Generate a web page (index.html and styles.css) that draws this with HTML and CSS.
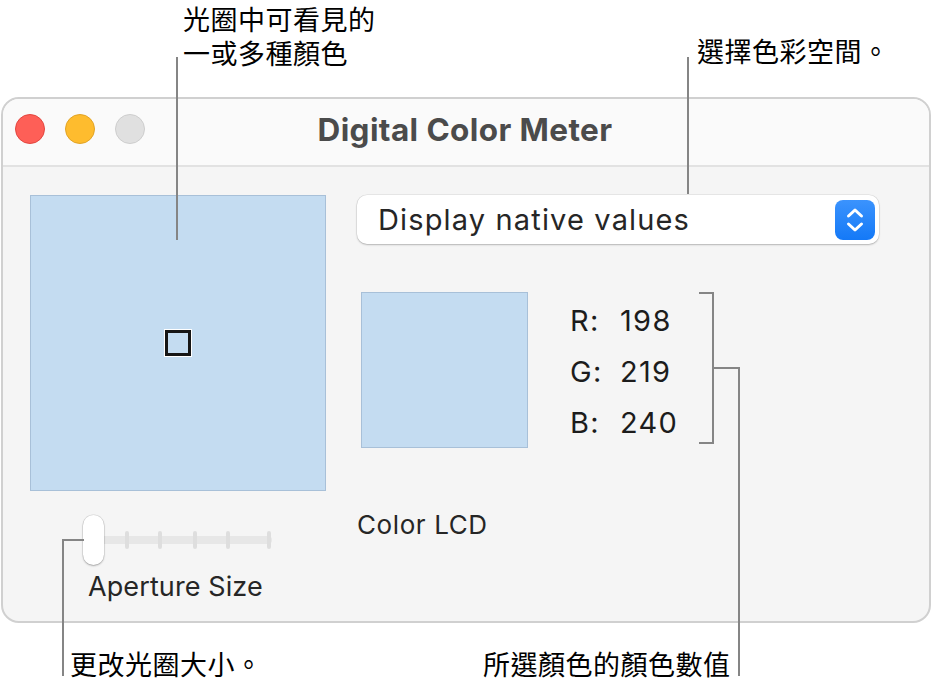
FILE: index.html
```html
<!DOCTYPE html>
<html lang="zh-Hant">
<head>
<meta charset="utf-8">
<title>Digital Color Meter</title>
<link rel="stylesheet" href="styles.css">
</head>
<body>
<div class="figure">
  <div class="window">
    <div class="titlebar">
      <div class="lights">
        <span class="light red"></span>
        <span class="light yellow"></span>
        <span class="light gray"></span>
      </div>
      <div class="title">Digital Color Meter</div>
    </div>
    <div class="content">
      <div class="left-col">
        <div class="aperture"><span class="marker"></span></div>
        <div class="slider">
          <div class="track">
            <span class="tick"></span><span class="tick"></span><span class="tick"></span><span class="tick"></span><span class="tick"></span>
          </div>
          <span class="knob"></span>
        </div>
        <div class="slider-label">Aperture Size</div>
      </div>
      <div class="right-col">
        <div class="popup">
          <span class="popup-text">Display native values</span>
          <span class="popup-btn">
            <svg width="40" height="40" viewBox="0 0 40 40"><path d="M13.5 16 L20 10 L26.5 16" fill="none" stroke="#fff" stroke-width="3" stroke-linecap="round" stroke-linejoin="round"/><path d="M13.5 24 L20 30 L26.5 24" fill="none" stroke="#fff" stroke-width="3" stroke-linecap="round" stroke-linejoin="round"/></svg>
          </span>
        </div>
        <div class="readout">
          <div class="swatch"></div>
          <div class="values">
            <div class="vrow"><span class="vlabel">R:</span><span class="vnum">198</span></div>
            <div class="vrow"><span class="vlabel">G:</span><span class="vnum">219</span></div>
            <div class="vrow"><span class="vlabel">B:</span><span class="vnum">240</span></div>
          </div>
        </div>
        <div class="display-name">Color LCD</div>
      </div>
    </div>
  </div>

  <div class="callout c-aperture"><div class="cline">光圈中可看見的</div><div class="cline">一或多種顏色</div></div>
  <div class="callout c-space">選擇色彩空間。</div>
  <div class="callout c-size">更改光圈大小。</div>
  <div class="callout c-values">所選顏色的顏色數值</div>

  <span class="ln ln-aperture"></span>
  <span class="ln ln-space"></span>
  <span class="ln ln-size-h"></span>
  <span class="ln ln-size-v"></span>
  <span class="ln ln-br-top"></span>
  <span class="ln ln-br-v"></span>
  <span class="ln ln-br-bot"></span>
  <span class="ln ln-br-mid"></span>
  <span class="ln ln-values"></span>
</div>
</body>
</html>
```
FILE: styles.css
```css
* { box-sizing: border-box; }
html, body { margin: 0; padding: 0; background: #fff; }
body { font-family: Inter, "Noto Sans", sans-serif; }

.figure {
  position: relative;
  width: 934px;
  height: 689px;
  padding-top: 97px;
  padding-left: 1px;
}

.window {
  width: 930px;
  height: 526px;
  border: 2px solid #d0d0d0;
  border-radius: 18px;
  background: #f5f5f5;
  overflow: hidden;
}

.titlebar {
  position: relative;
  height: 68px;
  background: #fafafa;
  border-bottom: 2px solid #e2e2e2;
  display: flex;
  align-items: center;
  justify-content: center;
}
.lights {
  position: absolute;
  left: 12px;
  top: 15px;
  display: flex;
  gap: 20px;
}
.light {
  width: 30px;
  height: 30px;
  border-radius: 50%;
  display: block;
}
.red { background: #fe5f57; border: 1px solid #e2463f; }
.yellow { background: #febc2e; border: 1px solid #e1a326; }
.gray { background: #e0e0e0; border: 1px solid #cdcdcd; }
.title {
  font-size: 31.5px;
  font-weight: 700;
  color: #4b4b4b;
  letter-spacing: 0.4px;
  margin-top: -6px;
  margin-left: -2px;
}

.content {
  display: flex;
  padding: 28px 0 0 27px;
  gap: 31px;
}

.left-col { width: 296px; }
.aperture {
  width: 296px;
  height: 296px;
  background: #c4dcf1;
  border: 1px solid #a8c0d8;
  display: flex;
  align-items: center;
  justify-content: center;
}
.marker {
  width: 26px;
  height: 26px;
  border: 3px solid #161616;
  outline: 1px solid #fff;
  background: #c4dcf1;
}

.slider {
  position: relative;
  margin: 24px 0 0 53px;
  width: 190px;
  height: 50px;
}
.track {
  position: absolute;
  left: 10px;
  top: 21px;
  width: 179px;
  height: 8px;
  border-radius: 4px;
  background: #e7e7e7;
}
.tick {
  position: absolute;
  top: -5px;
  width: 4px;
  height: 18px;
  border-radius: 2px;
  background: #dedede;
}
.tick:nth-child(1) { left: 32px; }
.tick:nth-child(2) { left: 65px; }
.tick:nth-child(3) { left: 100px; }
.tick:nth-child(4) { left: 133px; }
.tick:nth-child(5) { left: 174px; }
.knob {
  position: absolute;
  left: 0;
  top: 0;
  width: 21px;
  height: 50px;
  border-radius: 11px;
  background: #fff;
  box-shadow: 0 1px 2px rgba(0,0,0,0.28), 0 0 0 0.5px rgba(0,0,0,0.12);
}
.slider-label {
  margin: 6px 0 0 58px;
  font-size: 27px;
  line-height: 32px;
  letter-spacing: 0.1px;
  color: #262626;
}

.right-col { width: 522px; }
.popup {
  height: 49px;
  background: #fff;
  border-radius: 10px;
  box-shadow: 0 1px 2px rgba(0,0,0,0.22), 0 0 0 0.5px rgba(0,0,0,0.1);
  display: flex;
  align-items: center;
  justify-content: space-between;
  padding: 0 4px 0 21px;
}
.popup-text {
  font-size: 29px;
  letter-spacing: 1.15px;
  color: #262626;
}
.popup-btn {
  width: 40px;
  height: 40px;
  border-radius: 8px;
  background: linear-gradient(#3b93fd, #1479f7);
  display: block;
}
.popup-btn svg { display: block; }

.readout {
  display: flex;
  margin-top: 48px;
  padding-left: 4px;
}
.swatch {
  width: 167px;
  height: 156px;
  background: #c4dcf1;
  border: 1px solid #a8c0d8;
}
.values {
  margin-left: 42px;
  padding-top: 3px;
  font-size: 29px;
  line-height: 51px;
  letter-spacing: 1.3px;
  color: #1c1c1c;
}
.vrow { display: flex; }
.vlabel { width: 50px; }

.display-name {
  margin-top: 61px;
  font-size: 26px;
  letter-spacing: 0.6px;
  color: #262626;
}

.callout {
  position: absolute;
  font-family: "Noto Sans CJK TC", sans-serif;
  font-size: 27px;
  line-height: 34px;
  letter-spacing: 0.5px;
  color: #000;
}
.cline { height: 34px; }
.c-aperture { left: 183px; top: 2px; }
.c-space { left: 697px; top: 34px; }
.c-size { left: 70px; top: 647px; }
.c-values { left: 483px; top: 647px; }

.ln { position: absolute; background: #858585; display: block; }
.ln-aperture { left: 176px; top: 57px; width: 2px; height: 183px; }
.ln-space { left: 687px; top: 57px; width: 2px; height: 137px; }
.ln-size-h { left: 62px; top: 539px; width: 22px; height: 2px; }
.ln-size-v { left: 62px; top: 539px; width: 2px; height: 137px; }
.ln-br-top { left: 699px; top: 292px; width: 15px; height: 2px; }
.ln-br-v { left: 712px; top: 292px; width: 2px; height: 152px; }
.ln-br-bot { left: 699px; top: 442px; width: 15px; height: 2px; }
.ln-br-mid { left: 712px; top: 367px; width: 28px; height: 2px; }
.ln-values { left: 738px; top: 367px; width: 2px; height: 309px; }
```
